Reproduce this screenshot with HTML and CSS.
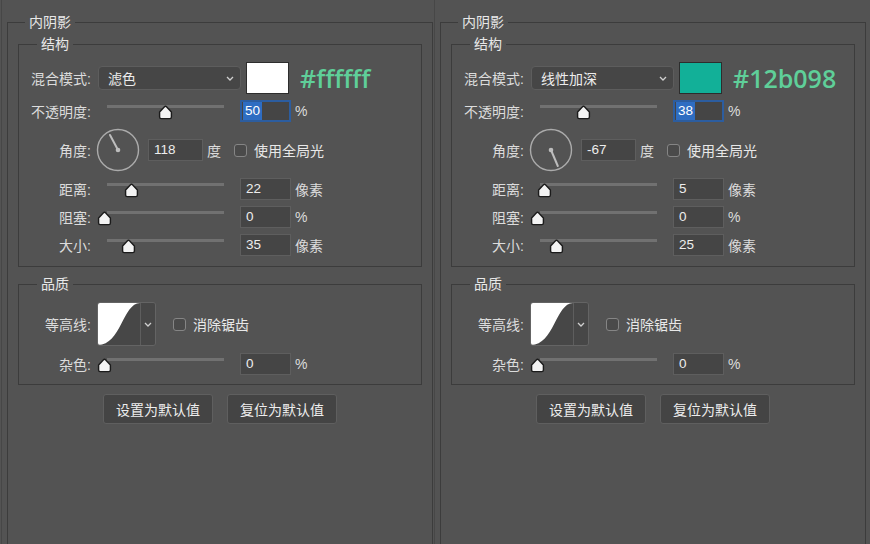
FILE: index.html
```html
<!DOCTYPE html>
<html lang="zh-CN">
<head>
<meta charset="utf-8">
<title>内阴影</title>
<link rel="stylesheet" href="styles.css">
</head>
<body>
<svg class="defs" width="0" height="0" aria-hidden="true">
  <defs>
    <symbol id="thumb" viewBox="0 0 15 15">
      <path d="M7.5 1.2 Q8 1.2 8.5 1.8 L13.4 7 V12 Q13.4 13.6 11.8 13.6 H3.2 Q1.6 13.6 1.6 12 V7 L6.5 1.8 Q7 1.2 7.5 1.2 Z" fill="#f3f3f3" stroke="#1b1b1b" stroke-width="1.4" stroke-linejoin="round"/>
    </symbol>
    <symbol id="chev" viewBox="0 0 8 5">
      <path d="M1 1 L4 4 L7 1" fill="none" stroke="#d0d0d0" stroke-width="1.3"/>
    </symbol>
  </defs>
</svg>

<div class="panel">
  <fieldset class="group outer">
    <legend>内阴影</legend>
    <fieldset class="group box struct">
      <legend>结构</legend>
      <div class="rows">
        <div class="row">
          <span class="label">混合模式:</span>
          <div class="select"><span>滤色</span><svg class="chev"><use href="#chev"/></svg></div>
          <div class="swatch swatch-white"></div>
          <span class="hex">#ffffff</span>
        </div>
        <div class="row">
          <span class="label">不透明度:</span>
          <div class="slider"><div class="track"></div><svg class="thumb" style="left:60px"><use href="#thumb"/></svg></div>
          <div class="field active"><span class="sel">50</span></div>
          <span class="unit">%</span>
        </div>
        <div class="row">
          <span class="label">角度:</span>
          <svg class="dial" viewBox="0 0 44 44">
            <circle cx="22" cy="22" r="20.5" fill="none" stroke="#ababab" stroke-width="1.4"/>
            <line x1="22" y1="22" x2="14" y2="7" stroke="#bdbdbd" stroke-width="2" stroke-linecap="round"/>
            <circle cx="22" cy="22" r="2.3" fill="#bdbdbd"/>
          </svg>
          <div class="field angle">118</div>
          <span class="deg">度</span>
          <span class="check"></span>
          <span class="check-text">使用全局光</span>
        </div>
        <div class="row">
          <span class="label">距离:</span>
          <div class="slider"><div class="track"></div><svg class="thumb" style="left:26px"><use href="#thumb"/></svg></div>
          <div class="field">22</div>
          <span class="unit">像素</span>
        </div>
        <div class="row">
          <span class="label">阻塞:</span>
          <div class="slider"><div class="track"></div><svg class="thumb" style="left:-1px"><use href="#thumb"/></svg></div>
          <div class="field">0</div>
          <span class="unit">%</span>
        </div>
        <div class="row">
          <span class="label">大小:</span>
          <div class="slider"><div class="track"></div><svg class="thumb" style="left:23px"><use href="#thumb"/></svg></div>
          <div class="field">35</div>
          <span class="unit">像素</span>
        </div>
      </div>
    </fieldset>
    <fieldset class="group box quality">
      <legend>品质</legend>
      <div class="rows rows-q">
        <div class="row">
          <span class="label">等高线:</span>
          <div class="contour">
            <svg class="curve" viewBox="0 0 42 42">
              <rect width="42" height="42" fill="#474747"/>
              <path d="M0 0 H42 C25 0 23 42 0 42 Z" fill="#ffffff"/>
            </svg>
            <div class="contour-drop"><svg class="chev"><use href="#chev"/></svg></div>
          </div>
          <span class="check check-q"></span>
          <span class="check-text">消除锯齿</span>
        </div>
        <div class="row">
          <span class="label">杂色:</span>
          <div class="slider"><div class="track"></div><svg class="thumb" style="left:-1px"><use href="#thumb"/></svg></div>
          <div class="field">0</div>
          <span class="unit">%</span>
        </div>
      </div>
    </fieldset>
    <div class="buttons">
      <div class="btn">设置为默认值</div>
      <div class="btn">复位为默认值</div>
    </div>
  </fieldset>
</div>

<div class="panel">
  <fieldset class="group outer">
    <legend>内阴影</legend>
    <fieldset class="group box struct">
      <legend>结构</legend>
      <div class="rows">
        <div class="row">
          <span class="label">混合模式:</span>
          <div class="select"><span>线性加深</span><svg class="chev"><use href="#chev"/></svg></div>
          <div class="swatch swatch-teal"></div>
          <span class="hex">#12b098</span>
        </div>
        <div class="row">
          <span class="label">不透明度:</span>
          <div class="slider"><div class="track"></div><svg class="thumb" style="left:45px"><use href="#thumb"/></svg></div>
          <div class="field active"><span class="sel">38</span></div>
          <span class="unit">%</span>
        </div>
        <div class="row">
          <span class="label">角度:</span>
          <svg class="dial" viewBox="0 0 44 44">
            <circle cx="22" cy="22" r="20.5" fill="none" stroke="#ababab" stroke-width="1.4"/>
            <line x1="22" y1="22" x2="28.8" y2="38" stroke="#bdbdbd" stroke-width="2" stroke-linecap="round"/>
            <circle cx="22" cy="22" r="2.3" fill="#bdbdbd"/>
          </svg>
          <div class="field angle">-67</div>
          <span class="deg">度</span>
          <span class="check"></span>
          <span class="check-text">使用全局光</span>
        </div>
        <div class="row">
          <span class="label">距离:</span>
          <div class="slider"><div class="track"></div><svg class="thumb" style="left:6px"><use href="#thumb"/></svg></div>
          <div class="field">5</div>
          <span class="unit">像素</span>
        </div>
        <div class="row">
          <span class="label">阻塞:</span>
          <div class="slider"><div class="track"></div><svg class="thumb" style="left:-1px"><use href="#thumb"/></svg></div>
          <div class="field">0</div>
          <span class="unit">%</span>
        </div>
        <div class="row">
          <span class="label">大小:</span>
          <div class="slider"><div class="track"></div><svg class="thumb" style="left:18px"><use href="#thumb"/></svg></div>
          <div class="field">25</div>
          <span class="unit">像素</span>
        </div>
      </div>
    </fieldset>
    <fieldset class="group box quality">
      <legend>品质</legend>
      <div class="rows rows-q">
        <div class="row">
          <span class="label">等高线:</span>
          <div class="contour">
            <svg class="curve" viewBox="0 0 42 42">
              <rect width="42" height="42" fill="#474747"/>
              <path d="M0 0 H42 C25 0 23 42 0 42 Z" fill="#ffffff"/>
            </svg>
            <div class="contour-drop"><svg class="chev"><use href="#chev"/></svg></div>
          </div>
          <span class="check check-q"></span>
          <span class="check-text">消除锯齿</span>
        </div>
        <div class="row">
          <span class="label">杂色:</span>
          <div class="slider"><div class="track"></div><svg class="thumb" style="left:-1px"><use href="#thumb"/></svg></div>
          <div class="field">0</div>
          <span class="unit">%</span>
        </div>
      </div>
    </fieldset>
    <div class="buttons">
      <div class="btn">设置为默认值</div>
      <div class="btn">复位为默认值</div>
    </div>
  </fieldset>
</div>
</body>
</html>
```

FILE: styles.css
```css
* { box-sizing: border-box; }

html, body {
  margin: 0;
  padding: 0;
}

body {
  width: 870px;
  height: 544px;
  overflow: hidden;
  background: #535353;
  display: flex;
  font-family: "Liberation Sans", "Noto Sans CJK SC", sans-serif;
  font-size: 14px;
  color: #e4e4e4;
}

.defs {
  position: absolute;
  width: 0;
  height: 0;
  overflow: hidden;
}

.panel {
  flex: none;
  width: 432px;
  height: 544px;
  margin-left: 1px;
  border-left: 1px solid #474747;
  padding: 13px 0 0 5px;
}

fieldset.group {
  margin: 0;
  min-width: 0;
  border: 1px solid #3c3c3c;
}

fieldset.outer {
  width: 426px;
  height: 532px;
  padding: 0 10px;
}

fieldset.outer > legend {
  margin-left: 7px;
  padding: 0 4px;
  height: 18px;
  line-height: 18px;
  color: #e8e8e8;
}

fieldset.box > legend {
  margin-left: 18px;
  padding: 0 4px;
  height: 18px;
  line-height: 18px;
  color: #e8e8e8;
}

fieldset.struct {
  margin-top: 4px;
  padding: 9px 0 10px;
}

fieldset.quality {
  margin-top: 8px;
  padding: 9px 0 9px;
}

.rows {
  display: flex;
  flex-direction: column;
  gap: 6px;
}

.rows-q {
  gap: 7px;
}

.row {
  display: flex;
  align-items: center;
  min-height: 22px;
}

.label {
  flex: none;
  width: 72px;
  text-align: right;
  white-space: nowrap;
  color: #dcdcdc;
}

.select {
  flex: none;
  width: 143px;
  height: 24px;
  margin-left: 7px;
  padding: 0 6px 0 9px;
  display: flex;
  align-items: center;
  justify-content: space-between;
  background: #464646;
  border: 1px solid #5d5d5d;
  border-radius: 4px;
  color: #ececec;
}

.chev {
  width: 8px;
  height: 5px;
  flex: none;
}

.swatch {
  flex: none;
  width: 43px;
  height: 32px;
  margin-left: 5px;
  border: 1px solid #2d2d2d;
}

.swatch-white { background: #ffffff; }
.swatch-teal { background: #12b098; }

.hex {
  margin-left: 11px;
  font-family: "Open Sans", "Liberation Sans", sans-serif;
  font-size: 25px;
  font-weight: 600;
  color: #5fcf99;
  line-height: 32px;
}

.slider {
  flex: none;
  position: relative;
  width: 142px;
  height: 22px;
  margin-left: 7px;
}

.track {
  width: 117px;
  height: 3px;
  margin: 5px 0 0 9px;
  background: #717171;
}

.thumb {
  position: absolute;
  top: 5px;
  width: 15px;
  height: 15px;
}

.field {
  flex: none;
  width: 51px;
  height: 22px;
  padding-left: 5px;
  background: #454545;
  border: 1px solid #5e5e5e;
  font-size: 13.5px;
  line-height: 20px;
  color: #ededed;
}

.field.active {
  border: 2px solid #2c5d9f;
  padding-left: 1px;
  line-height: 18px;
}

.sel {
  display: inline-block;
  padding: 0 2px;
  background: #2e6dc2;
  color: #ffffff;
}

.unit {
  margin-left: 4px;
  color: #dcdcdc;
}

.dial {
  flex: none;
  width: 44px;
  height: 44px;
  margin-left: 5px;
}

.field.angle {
  width: 55px;
  margin-left: 8px;
}

.deg {
  margin-left: 4px;
  color: #dcdcdc;
}

.check {
  flex: none;
  width: 13px;
  height: 13px;
  margin-left: 13px;
  background: #4a4a4a;
  border: 1px solid #858585;
  border-radius: 3px;
}

.check-q {
  margin-left: 17px;
}

.check-text {
  margin-left: 7px;
  color: #e8e8e8;
}

.contour {
  flex: none;
  display: flex;
  height: 44px;
  margin-left: 6px;
  border: 1px solid #646464;
  border-radius: 3px;
  overflow: hidden;
}

.curve {
  width: 42px;
  height: 42px;
  display: block;
}

.contour-drop {
  width: 15px;
  border-left: 1px solid #5e5e5e;
  background: #474747;
  display: flex;
  align-items: center;
  justify-content: center;
}

.buttons {
  display: flex;
  justify-content: center;
  gap: 14px;
  margin-top: 9px;
}

.btn {
  width: 110px;
  height: 30px;
  display: flex;
  align-items: center;
  justify-content: center;
  background: #444444;
  border: 1px solid #5f5f5f;
  border-radius: 3px;
  color: #ededed;
}
```
